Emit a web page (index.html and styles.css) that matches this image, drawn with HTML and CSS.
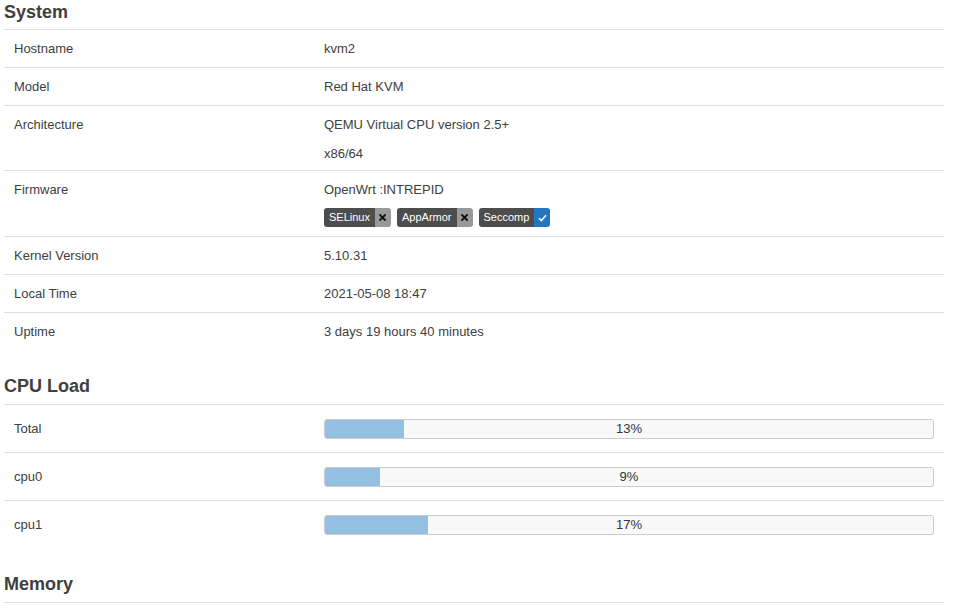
FILE: index.html
```html
<!DOCTYPE html>
<html>
<head>
<meta charset="utf-8">
<link rel="stylesheet" href="styles.css">
</head>
<body>
<div class="page">
  <section class="section">
    <h2 class="heading heading-first">System</h2>
    <div class="table">
      <div class="row"><div class="label">Hostname</div><div class="value">kvm2</div></div>
      <div class="row"><div class="label">Model</div><div class="value">Red Hat KVM</div></div>
      <div class="row"><div class="label label-top">Architecture</div><div class="value value-multi"><div>QEMU Virtual CPU version 2.5+</div><div class="second-line">x86/64</div></div></div>
      <div class="row"><div class="label label-top">Firmware</div><div class="value value-fw"><div>OpenWrt :INTREPID</div>
        <div class="badges">
          <span class="badge"><span class="badge-name">SELinux</span><span class="badge-state off"><svg width="7" height="7" viewBox="0 0 7 7"><path d="M1 1L6 6M6 1L1 6" stroke="#111" stroke-width="1.8" stroke-linecap="square"/></svg></span></span>
          <span class="badge"><span class="badge-name">AppArmor</span><span class="badge-state off"><svg width="7" height="7" viewBox="0 0 7 7"><path d="M1 1L6 6M6 1L1 6" stroke="#111" stroke-width="1.8" stroke-linecap="square"/></svg></span></span>
          <span class="badge"><span class="badge-name">Seccomp</span><span class="badge-state on"><svg width="9" height="8" viewBox="0 0 9 8"><path d="M1 4.2L3.4 6.6L8 1.2" stroke="#fff" stroke-width="1.5" fill="none"/></svg></span></span>
        </div>
      </div></div>
      <div class="row"><div class="label">Kernel Version</div><div class="value">5.10.31</div></div>
      <div class="row"><div class="label">Local Time</div><div class="value">2021-05-08 18:47</div></div>
      <div class="row"><div class="label">Uptime</div><div class="value">3 days 19 hours 40 minutes</div></div>
    </div>
  </section>

  <section class="section">
    <h2 class="heading">CPU Load</h2>
    <div class="table">
      <div class="row row-bar"><div class="label">Total</div><div class="value"><div class="progress"><div class="fill" style="width:13%"></div><span class="pct">13%</span></div></div></div>
      <div class="row row-bar"><div class="label">cpu0</div><div class="value"><div class="progress"><div class="fill" style="width:9%"></div><span class="pct">9%</span></div></div></div>
      <div class="row row-bar"><div class="label">cpu1</div><div class="value"><div class="progress"><div class="fill" style="width:17%"></div><span class="pct">17%</span></div></div></div>
    </div>
  </section>

  <section class="section">
    <h2 class="heading">Memory</h2>
  </section>
</div>
</body>
</html>
```
FILE: styles.css
```css
html, body {
  margin: 0;
  padding: 0;
  background: #fff;
}
body {
  font-family: "Liberation Sans", Arial, sans-serif;
  font-size: 13px;
  color: #404040;
}
.page {
  width: 940px;
  margin-left: 4px;
}
.section + .section {
  margin-top: 25px;
}
.heading {
  margin: 0;
  font-size: 18px;
  line-height: 22px;
  font-weight: bold;
  color: #404040;
  height: 29px;
  box-sizing: border-box;
  border-bottom: 1px solid #ddd;
  height: 30px;
  padding-bottom: 7px;
}
.heading-first {
  padding-top: 1px;
}
.row {
  display: grid;
  grid-template-columns: 310px 1fr;
  border-bottom: 1px solid #ddd;
  line-height: 17px;
}
.row:last-child {
  border-bottom: none;
}
.label, .value {
  padding: 10px;
}
.value-multi {
  padding-bottom: 8px;
}
.second-line {
  margin-top: 12px;
}
.value-fw {
  padding-bottom: 9px;
}
.badges {
  display: flex;
  margin-top: 10px;
  gap: 6px;
}
.badge {
  display: inline-flex;
  height: 19px;
  border-radius: 3px;
  overflow: hidden;
  font-size: 11px;
  line-height: 19px;
  color: #fff;
}
.badge-name {
  background: #4d4d4d;
  padding: 0 5px;
}
.badge-state {
  width: 16px;
  display: flex;
  align-items: center;
  justify-content: center;
}
.badge-state.off {
  background: #999;
}
.badge-state.on {
  background: #2476c0;
}
.row-bar {
  align-items: center;
}
.row-bar .value {
  padding-top: 14px;
  padding-bottom: 13px;
}
.progress {
  position: relative;
  height: 20px;
  box-sizing: border-box;
  border: 1px solid #ccc;
  border-radius: 3px;
  background: #f9f9f9;
  overflow: hidden;
}
.fill {
  height: 100%;
  background: #94c0e1;
}
.pct {
  position: absolute;
  left: 0;
  right: 0;
  top: 0;
  line-height: 18px;
  text-align: center;
  color: #333;
}
```
